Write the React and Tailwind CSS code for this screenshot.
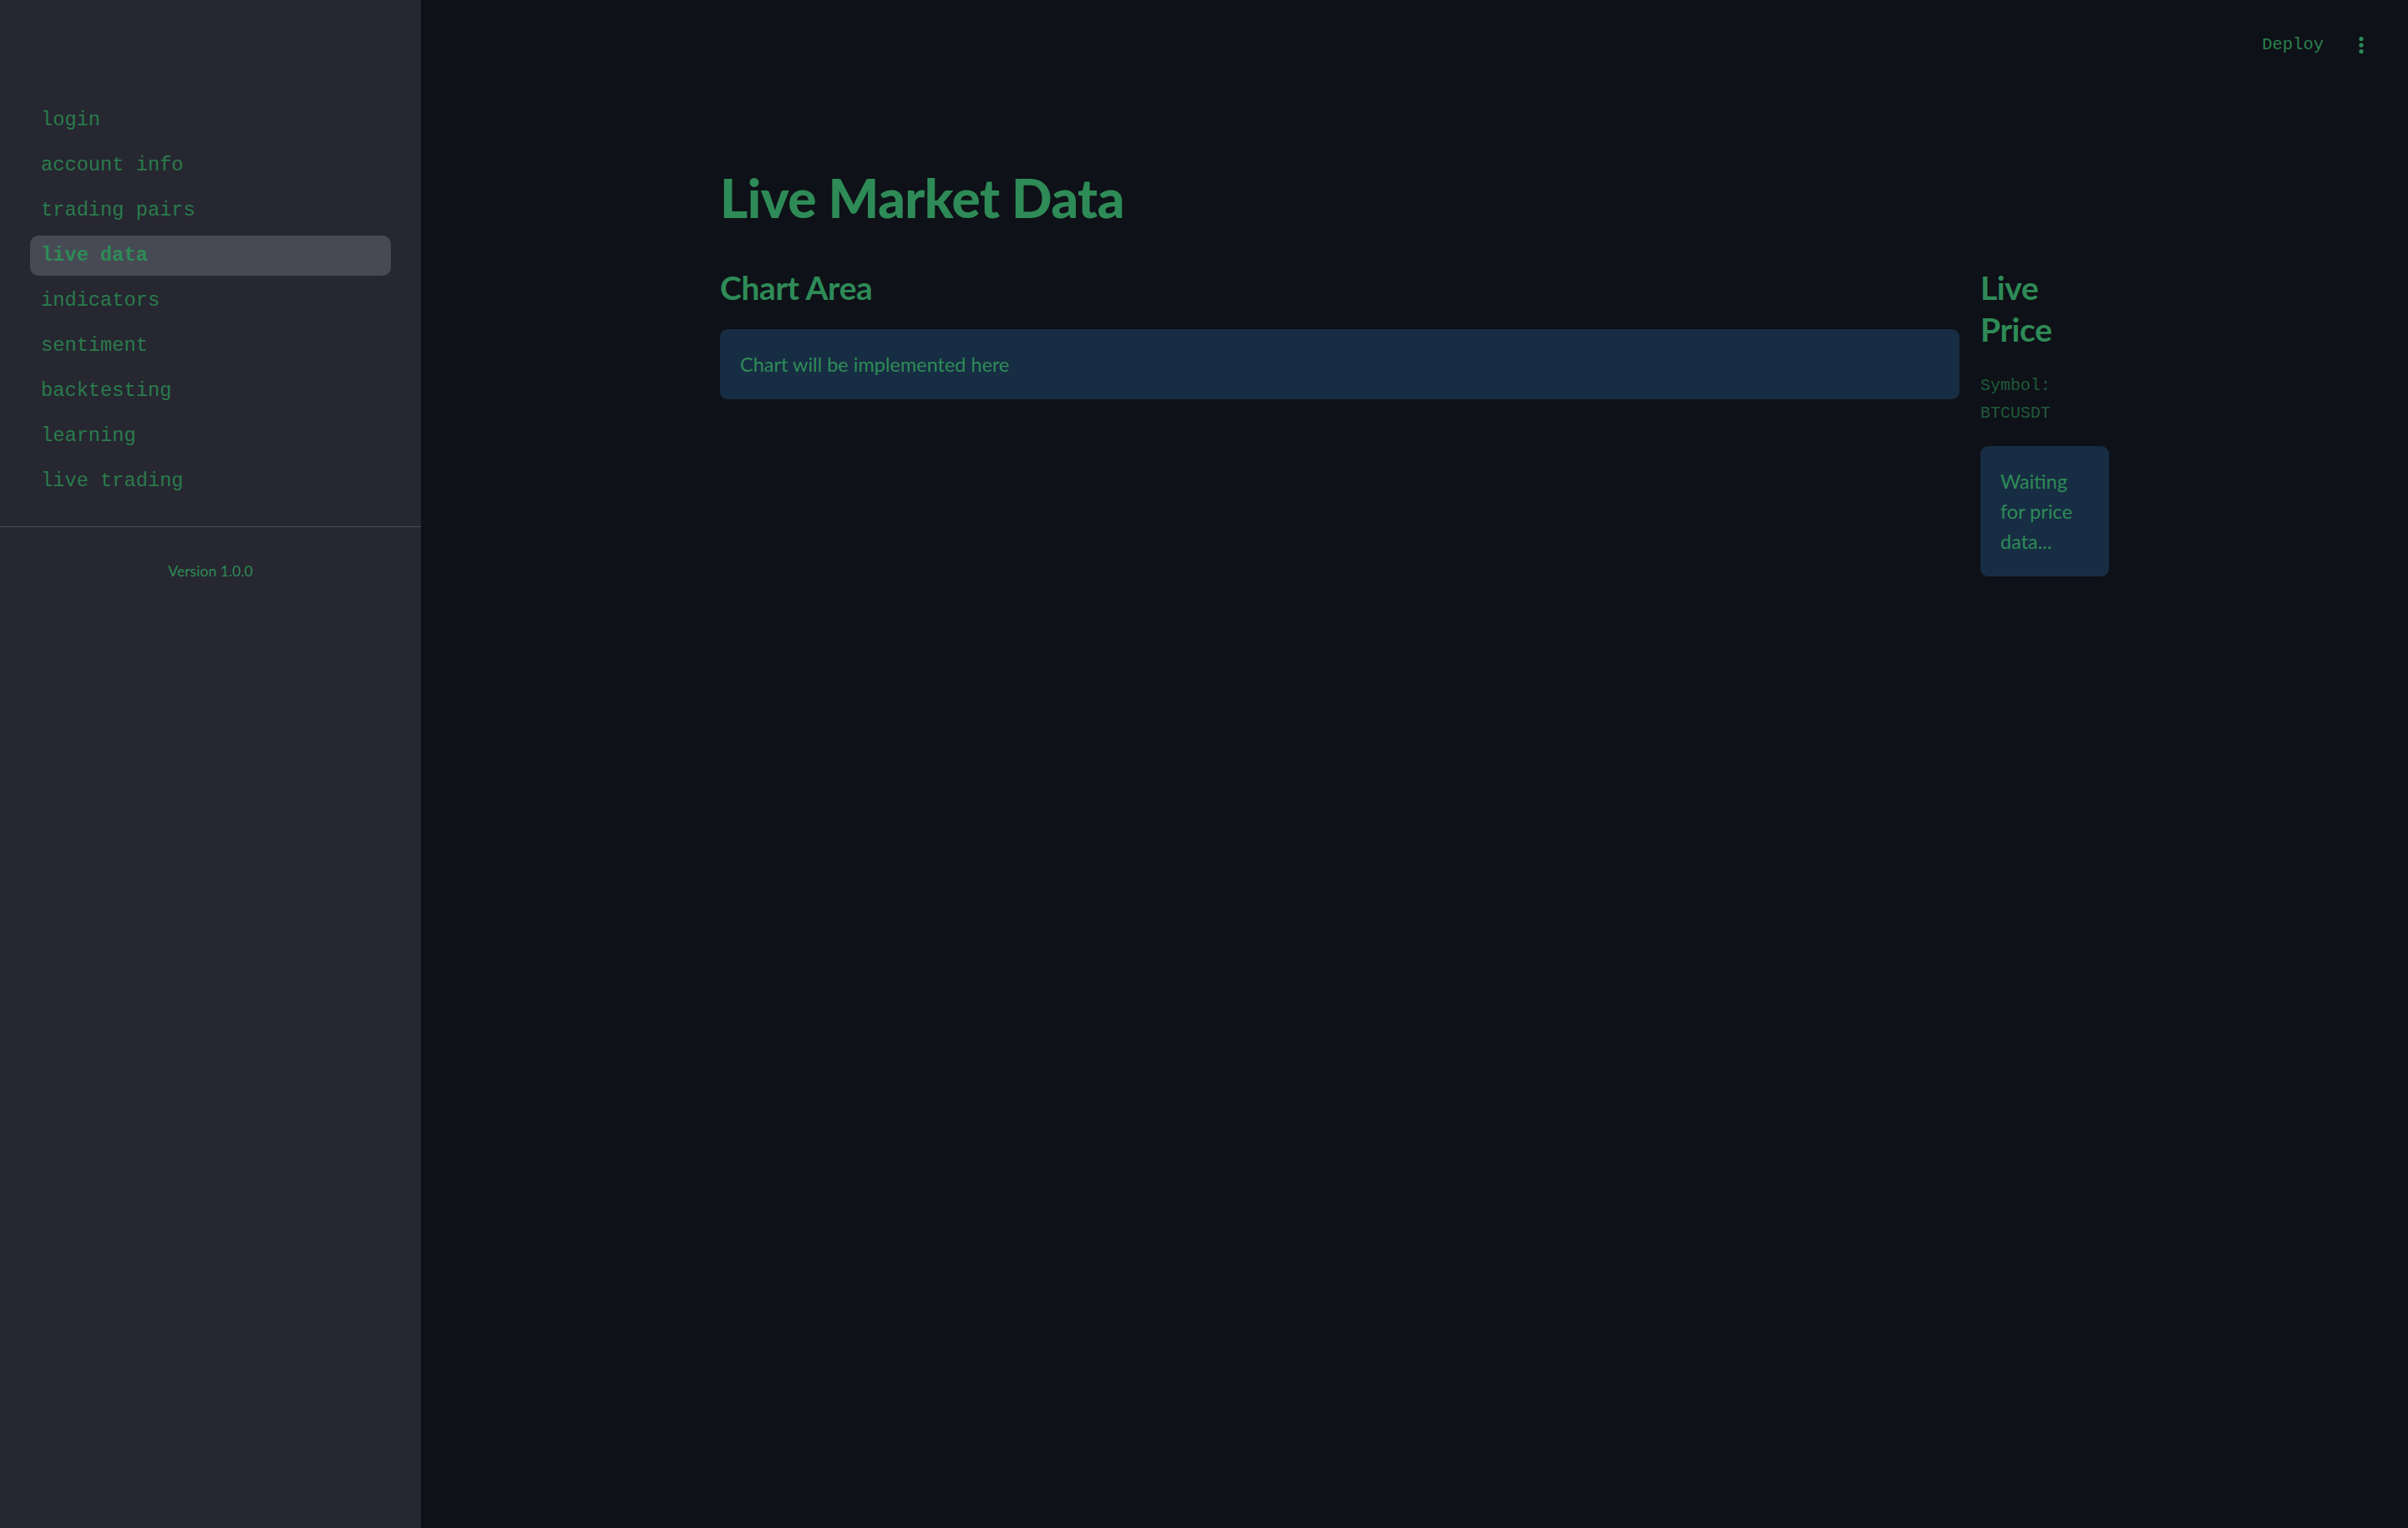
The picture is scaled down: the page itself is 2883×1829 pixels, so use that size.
import React from "react";

const navItems = [
  "login",
  "account info",
  "trading pairs",
  "live data",
  "indicators",
  "sentiment",
  "backtesting",
  "learning",
  "live trading",
];

const mono = { fontFamily: '"Liberation Mono", "Courier New", monospace' };

const Sidebar = ({ active }) => (
  <aside className="w-[504px] shrink-0 bg-[#262730] min-h-screen flex flex-col">
    <nav className="pt-[120px] px-[36px] flex flex-col gap-[6px]">
      {navItems.map((item) => (
        <div
          key={item}
          className={
            item === active
              ? "h-[48px] flex items-center pl-[13px] rounded-[10px] bg-[#474a55] text-[#2e8b57] font-bold text-[23.7px]"
              : "h-[48px] flex items-center pl-[13px] rounded-[10px] text-[#2a7b4d] text-[23.7px]"
          }
          style={mono}
        >
          {item}
        </div>
      ))}
    </nav>
    <div className="mt-[30px] h-px bg-[#4b4c55]" />
    <p className="mt-[40px] text-center text-[17.6px] leading-[26px] text-[#2e8b57] font-['Lato',sans-serif]">
      Version 1.0.0
    </p>
  </aside>
);

const Header = () => (
  <header className="h-[108px] flex items-center justify-end pr-[52px] gap-[41px]">
    <span className="text-[20.5px] text-[#2b804f]" style={mono}>
      Deploy
    </span>
    <svg width="8" height="24" viewBox="0 0 8 24" className="text-[#2e8b57]">
      <circle cx="4" cy="4.5" r="2.6" fill="currentColor" />
      <circle cx="4" cy="12" r="2.6" fill="currentColor" />
      <circle cx="4" cy="19.5" r="2.6" fill="currentColor" />
    </svg>
  </header>
);

export default function App() {
  return (
    <div className="flex min-h-screen bg-[#0e1117] font-['Lato',sans-serif]">
      <Sidebar active="live data" />
      <main className="flex-1 flex flex-col">
        <Header />
        <div className="w-full max-w-[1663px] mx-auto pt-[91px]">
          <h1 className="text-[64px] leading-[1.2] font-black text-[#2e8b57] tracking-[-0.6px]">
            Live Market Data
          </h1>
          <div className="mt-[43px] flex gap-[25px] items-start">
            {/* chart column */}
            <section className="flex-1">
              <h3 className="text-[39px] leading-[50px] font-bold text-[#2e8b57] tracking-[-0.4px]">
                Chart Area
              </h3>
              <div className="mt-[25px] rounded-[9px] bg-[#172d43] px-[24px] py-[24px] text-[23.5px] leading-[36px] text-[#2e8b57]">
                Chart will be implemented here
              </div>
            </section>

            {/* price column */}
            <section className="w-[154px] shrink-0">
              <h3 className="text-[39px] leading-[50px] font-bold text-[#2e8b57] tracking-[-0.4px]">
                Live Price
              </h3>
              <p className="mt-[26px] text-[20px] leading-[33px] text-[#1f5a3b]" style={mono}>
                Symbol: BTCUSDT
              </p>
              <div className="mt-[23px] rounded-[9px] bg-[#172d43] pl-[24px] pr-[28px] py-[24px] text-[23.5px] leading-[36px] text-[#2e8b57]">
                Waiting for price data...
              </div>
            </section>
          </div>
        </div>
      </main>
    </div>
  );
}
